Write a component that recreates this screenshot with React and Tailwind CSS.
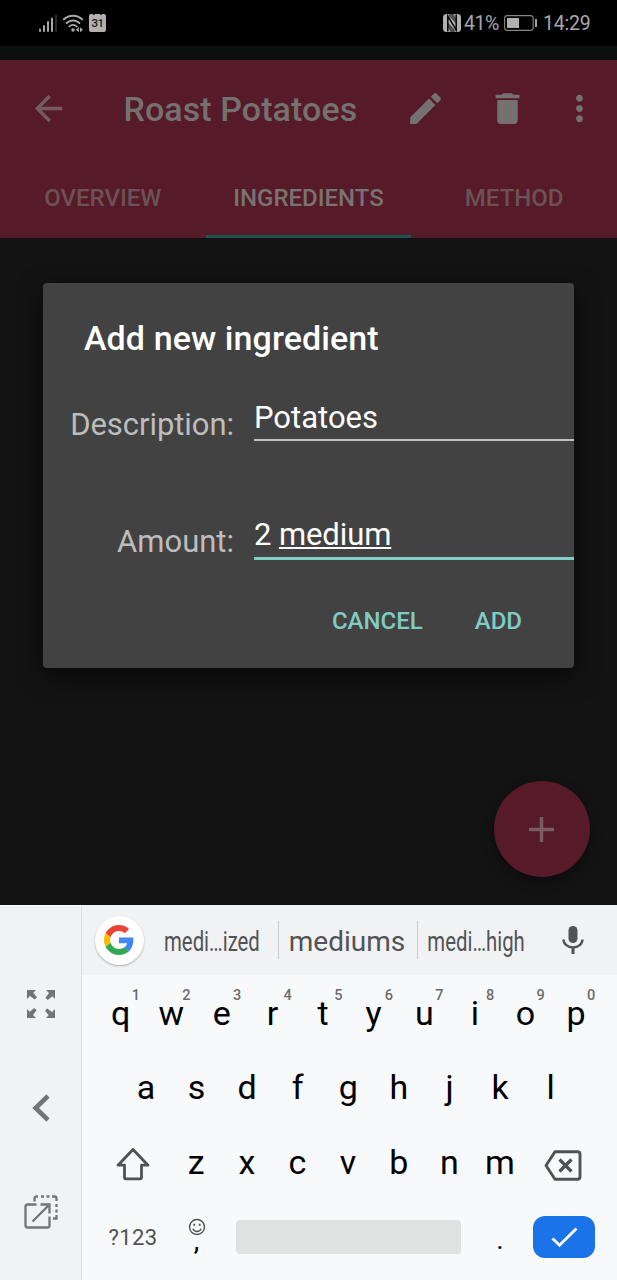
const EDIT =
  'M3 17.25V21h3.75L17.81 9.94l-3.75-3.75L3 17.25zM20.71 7.04a1 1 0 0 0 0-1.41l-2.34-2.34a1 1 0 0 0-1.41 0l-1.83 1.83 3.75 3.75 1.83-1.83z'
const TRASH = 'M6 19c0 1.1.9 2 2 2h8c1.1 0 2-.9 2-2V7H6v12zM19 4h-3.5l-1-1h-5l-1 1H5v2h14V4z'
const BACK = 'M20 11H7.83l5.59-5.59L12 4l-8 8 8 8 1.41-1.41L7.83 13H20v-2z'
const MORE =
  'M12 8c1.1 0 2-.9 2-2s-.9-2-2-2-2 .9-2 2 .9 2 2 2zm0 2c-1.1 0-2 .9-2 2s.9 2 2 2 2-.9 2-2-.9-2-2-2zm0 6c-1.1 0-2 .9-2 2s.9 2 2 2 2-.9 2-2-.9-2-2-2z'

function Icon({ d, className }) {
  return (
    <svg viewBox="0 0 24 24" fill="currentColor" className={className}>
      <path d={d} />
    </svg>
  )
}

function StatusBar() {
  return (
    <div className="flex h-[46px] items-center bg-black pr-[25px] pl-[38px] text-[19.5px] text-[#a8a8a8]">
      <svg className="h-[20px] w-[20px]" viewBox="0 0 20 20" fill="currentColor">
        <rect x="1" y="15.5" width="2" height="3.5" rx="1" />
        <rect x="5" y="12" width="2" height="7" rx="1" />
        <rect x="9" y="8" width="2" height="11" rx="1" />
        <rect x="13" y="4.5" width="2" height="14.5" rx="1" />
        <rect x="17.2" y="1.5" width="1.6" height="17.5" rx=".8" fill="#333" />
      </svg>
      <svg className="ml-[4px] h-[20px] w-[22px]" viewBox="0 0 22 20" fill="none" stroke="currentColor" strokeWidth="1.9" strokeLinecap="round">
        <path d="M1.8 6.3a13.5 13.5 0 0 1 18.4 0" />
        <path d="M4.6 10a9.4 9.4 0 0 1 12.8 0" />
        <path d="M7.4 13.4a5.4 5.4 0 0 1 7.2 0" />
        <circle cx="11" cy="17" r="1.8" fill="currentColor" stroke="none" />
        <path d="M16.9 14.2v5L13.8 16.7zM18 14.2v5l3-2.5z" fill="currentColor" stroke="none" />
      </svg>
      <div className="ml-[5px] flex h-[18px] w-[17px] flex-col items-center rounded-[2px] bg-[#b0b0b0] text-[#1b1b1b]">
        <div className="flex h-[2px] w-[9px] justify-between">
          <span className="w-[2px] bg-[#333]" />
          <span className="w-[2px] bg-[#333]" />
        </div>
        <span className="text-[11.5px] leading-[17px] font-medium tracking-[-0.6px]">31</span>
      </div>
      <div className="flex-1" />
      <svg className="h-[18px] w-[18px]" viewBox="0 0 18 18">
        <rect x="0" y="0" width="18" height="18" rx="3.5" fill="#b0b0b0" />
        <path d="M4.8 17.500V2.200L13.200 15.800V.5" fill="none" stroke="#000" strokeWidth="1.500" />
        <path d="M5 1 6.800 0H10.500L13 4.500V9.500ZM13 17 11.200 18H7.500L5 13.500V8.500Z" fill="#000" opacity=".55" />
      </svg>
      <span className="ml-[3px] w-[37px] pt-[2px] tracking-[-0.4px]">41%</span>
      <svg className="ml-[2px] h-[18px] w-[35px]" viewBox="0 0 35 18" fill="none">
        <rect x="1.6" y="1.6" width="28.6" height="14.8" rx="2.8" stroke="#858585" strokeWidth="1.1" />
        <rect x="4" y="4" width="12" height="10" fill="#b0b0b0" />
        <rect x="32" y="5" width="2" height="8" fill="#a0a0a0" />
      </svg>
      <span className="ml-[5px] w-[49px] pt-[2px] tracking-[-0.2px]">14:29</span>
    </div>
  )
}

function Header() {
  return (
    <header className="bg-[#561a28] text-[#747170]">
      <div className="flex h-[97px] items-center pl-[27.5px]">
        <Icon d={BACK} className="h-[41px] w-[41px] text-[#735b60]" />
        <h1 className="ml-[55px] w-[280px] pt-[2px] text-[34px] font-medium tracking-[0.08px]">Roast Potatoes</h1>
        <Icon d={EDIT} className="ml-[1px] h-[41px] w-[41px]" />
        <Icon d={TRASH} className="ml-[41.5px] h-[41px] w-[41px]" />
        <Icon d={MORE} className="ml-[31px] h-[41px] w-[41px]" />
      </div>
      <nav className="grid h-[81px] grid-cols-3 text-center text-[24px] leading-[82px] font-medium text-[#6c5255]">
        <span>OVERVIEW</span>
        <span className="h-[81px] border-b-3 border-[#1d5451] text-[#787472]">INGREDIENTS</span>
        <span>METHOD</span>
      </nav>
    </header>
  )
}

function Dialog() {
  return (
    <section className="ml-[43px] h-[385px] w-[531px] rounded-[4px] bg-[#424242] shadow-[0_8px_24px_rgba(0,0,0,0.6)]">
      <h2 className="h-[112px] pl-[41px] text-[34px] leading-[111px] font-medium tracking-[0.08px] text-white">Add new ingredient</h2>
      <div className="flex h-[116px] items-start text-[31px]">
        <label className="w-[191px] text-right leading-[59px] tracking-[-0.05px] text-[#bdbdbd]">Description:</label>
        <div className="ml-[20px] h-[46px] flex-1 border-b-2 border-[#c0c0c0] leading-[46px] text-white">Potatoes</div>
      </div>
      <div className="flex h-[49px] items-start text-[31px]">
        <label className="w-[191px] text-right leading-[61px] text-[#bdbdbd]">Amount:</label>
        <div className="ml-[20px] h-[49px] flex-1 border-b-3 border-[#80cbc4] leading-[48px] tracking-[-0.1px] text-white">
          2 <span className="underline decoration-[1.5px] underline-offset-[2px]">medium</span>
        </div>
      </div>
      <div className="flex justify-end gap-[52px] pt-[43px] pr-[52px] text-[24px] leading-[36px] font-medium text-[#80cbc4]">
        <button>CANCEL</button>
        <button>ADD</button>
      </div>
    </section>
  )
}

function SidePanel() {
  return (
    <aside className="flex w-[82px] flex-col items-center border-r border-[#dcdee0] bg-[#f1f2f4] text-[#737475]">
      <svg className="mt-[84px] h-[28px] w-[28px]" viewBox="0 0 28 28" fill="currentColor">
        {[0, 90, 180, 270].map((turn) => (
          <path key={turn} d="M0 0H9L6.3 2.7 10 7.2 7.8 9.6 3 6 0 9Z" transform={`rotate(${turn} 14 14)`} />
        ))}
      </svg>
      <svg className="mt-[76px] h-[28px] w-[18px]" viewBox="0 0 18 28" fill="none" stroke="currentColor" strokeWidth="4.6">
        <path d="M16 2 3.6 14 16 26" />
      </svg>
      <svg className="mt-[73px] h-[34px] w-[34px]" viewBox="0 0 34 34" fill="none" stroke="currentColor" strokeWidth="2.3">
        <path d="M12.5 9.5H3.5Q1.5 9.5 1.5 11.500V30.500Q1.500 32.500 3.500 32.500H23.500Q25.500 32.500 25.500 30.500V21.500" />
        <path d="M16.500 9.500H25.500V18.500M25 10 8.500 26.500" />
        <path d="M10.500 6.500V3.500Q10.500 1.500 12.500 1.500H14M17 1.500h3M22.500 1.500h3M28 1.500h2.500Q32.500 1.500 32.500 3.500V6M32.500 9v3M32.500 14.500v3M32.500 20v3.500H29" />
      </svg>
    </aside>
  )
}

function Suggestions() {
  return (
    <div className="flex h-[70px] items-center bg-[#f1f2f4] pl-[12.5px] text-[28px] whitespace-nowrap text-[#525355]">
      <div className="flex h-[49px] w-[49px] shrink-0 items-center justify-center rounded-full bg-white shadow-[0_1px_2px_rgba(0,0,0,0.3)]">
        <svg className="h-[30px] w-[30px]" viewBox="0 0 48 48">
          <path fill="#EA4335" d="M24 9.500c3.540 0 6.710 1.220 9.210 3.600l6.850-6.850C35.900 2.380 30.470 0 24 0 14.620 0 6.510 5.380 2.560 13.220l7.980 6.190C12.430 13.720 17.740 9.500 24 9.500z" />
          <path fill="#4285F4" d="M46.980 24.550c0-1.570-.15-3.090-.38-4.550H24v9.020h12.940c-.58 2.960-2.260 5.480-4.780 7.180l7.730 6c4.510-4.180 7.090-10.360 7.090-17.650z" />
          <path fill="#FBBC05" d="M10.530 28.590c-.48-1.450-.76-2.990-.76-4.590s.27-3.140.76-4.590l-7.980-6.190C.92 16.460 0 20.120 0 24c0 3.880.92 7.540 2.560 10.780l7.970-6.190z" />
          <path fill="#34A853" d="M24 48c6.480 0 11.930-2.130 15.890-5.810l-7.730-6c-2.150 1.450-4.920 2.300-8.160 2.300-6.260 0-11.570-4.220-13.470-9.910l-7.980 6.190C6.510 42.620 14.620 48 24 48z" />
        </svg>
      </div>
      <span className="flex w-[134px] shrink-0 justify-center pt-[4px] pl-[3px]">
        <span className="shrink-0 scale-x-[0.727]">medi…ized</span>
      </span>
      <span className="h-[38px] w-px shrink-0 bg-[#cbcccd]" />
      <span className="w-[137px] shrink-0 pt-[4px] text-center">mediums</span>
      <span className="ml-px h-[38px] w-px shrink-0 bg-[#cbcccd]" />
      <span className="flex w-[118px] shrink-0 justify-center pt-[4px]">
        <span className="shrink-0 scale-x-[0.727]">medi…high</span>
      </span>
      <svg className="ml-[26px] h-[28px] w-[22px] shrink-0" viewBox="0 0 22 28" fill="none" stroke="currentColor" strokeWidth="2.4">
        <rect x="6.500" y="0" width="9" height="17" rx="4.500" fill="currentColor" stroke="none" />
        <path d="M1.500 13.500a9.500 8 0 0 0 19 0" />
        <path d="M11 21.500V28" strokeWidth="3" />
      </svg>
    </div>
  )
}

function Key({ label, hint }) {
  return (
    <span className="relative w-[50.6px] text-center">
      {label}
      {hint && (
        <span className="absolute top-[13px] left-[36px] w-[9px] text-[14.500px] leading-[16px] font-medium text-[#6b6c6e]">{hint}</span>
      )}
    </span>
  )
}

function Keyboard() {
  return (
    <div className="flex h-[375px] border-t border-[#fafbfc] bg-[#f8f9fb]">
      <SidePanel />
      <div className="-mt-px flex-1">
        <Suggestions />
        <div className="text-[34px] leading-[75px] text-black">
          <div className="flex h-[75px] pl-[13.4px] leading-[76px]">
            {[...'qwertyuiop'].map((k, i) => (
              <Key key={k} label={k} hint={String((i + 1) % 10)} />
            ))}
          </div>
          <div className="flex h-[75px] pl-[38.6px]">
            {[...'asdfghjkl'].map((k) => (
              <Key key={k} label={k} />
            ))}
          </div>
          <div className="flex h-[75px] items-center pl-[34px]">
            <svg className="mt-[3px] mr-[21px] h-[34px] w-[34px]" viewBox="0 0 34 34" fill="none" stroke="#505153" strokeWidth="2.800" strokeLinejoin="round">
              <path d="M17 2.500 32 18.200H25.500V30.500Q25.500 31.800 24.200 31.800H9.800Q8.500 31.800 8.500 30.500V18.200H2Z" />
            </svg>
            {[...'zxcvbnm'].map((k) => (
              <Key key={k} label={k} />
            ))}
            <svg className="mt-[6px] ml-[19px] h-[31px] w-[38px]" viewBox="0 0 38 31" fill="none" stroke="#505153" strokeWidth="2.900" strokeLinejoin="round">
              <path d="M11 1.700H33.500Q36 1.700 36 4.200V26.800Q36 29.300 33.500 29.300H11L2 15.500Z" />
              <path d="M15.500 9.500 27.500 21.500M27.500 9.500 15.500 21.500" strokeWidth="3.200" />
            </svg>
          </div>
          <div className="flex h-[74px] items-center pl-[26.5px]">
            <span className="w-[63px] text-[22px] tracking-[0.400px] text-[#505153]">?123</span>
            <span className="flex w-[50px] flex-col items-center">
              <svg className="mt-[2px] h-[18px] w-[18px]" viewBox="0 0 18 18" fill="none" stroke="#505153" strokeWidth="1.400">
                <circle cx="9" cy="9" r="7.500" />
                <path d="M4.800 10.800a4.600 4.600 0 0 0 8.400 0" />
                <path d="M6.300 5.800v2M11.700 5.800v2" strokeWidth="1.800" />
              </svg>
              <span className="h-[22px] text-[28px] leading-[10px]">,</span>
            </span>
            <span className="ml-[14.5px] h-[34px] w-[225px] rounded-[4px] bg-[#e0e1e1]" />
            <span className="ml-[14px] w-[50px] pt-[4px] text-center text-[28px]">.</span>
            <button className="ml-[8px] flex h-[42px] w-[62px] items-center justify-center rounded-[12px] bg-[#1a73e8]">
              <svg className="h-[20px] w-[27px]" viewBox="0 0 27 20" fill="none" stroke="#fff" strokeWidth="2.800">
                <path d="M1.500 11.500 8.500 18.200 25.500 1.500" />
              </svg>
            </button>
          </div>
        </div>
      </div>
    </div>
  )
}

export default function App() {
  return (
    <div className="h-[1280px] w-[617px] overflow-hidden bg-[#131313] font-['Roboto',sans-serif]">
      <StatusBar />
      <div className="h-[14px] bg-[#0e0f0f]" />
      <Header />
      <main className="flex h-[667px] flex-col pt-[45px]">
        <Dialog />
        <button className="mt-[113px] mr-[27.500px] flex h-[96px] w-[96px] items-center justify-center self-end rounded-full bg-[#561a28] shadow-[0_5px_12px_rgba(0,0,0,0.4)]">
          <svg className="h-[25px] w-[25px]" viewBox="0 0 25 25" stroke="#7a5c63" strokeWidth="3.500">
            <path d="M12.500 0V25M0 12.500H25" />
          </svg>
        </button>
      </main>
      <Keyboard />
    </div>
  )
}
